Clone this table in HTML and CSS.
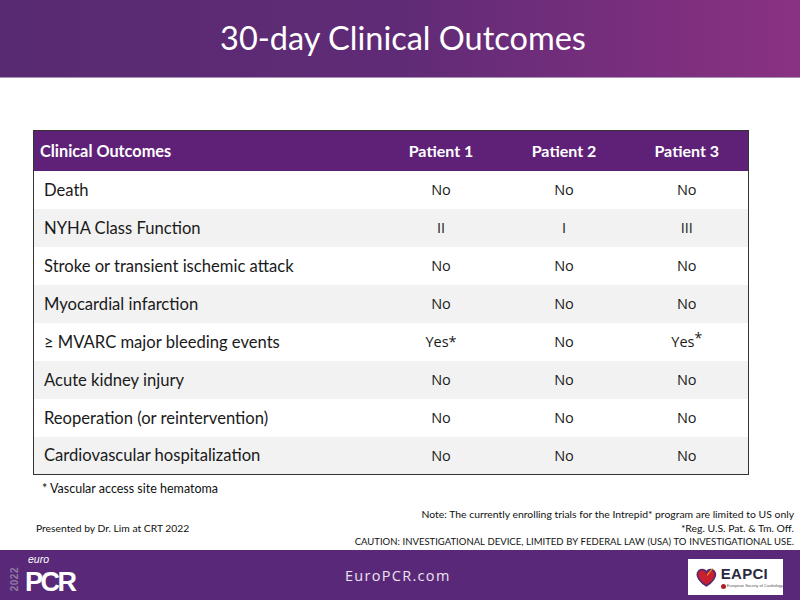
FILE: index.html
```html
<!DOCTYPE html>
<html>
<head>
<meta charset="utf-8">
<link rel="stylesheet" href="styles.css">
</head>
<body>
<div class="slide">
  <header class="titlebar"><h1>30-day Clinical Outcomes</h1></header>
  <main class="content">
    <table class="outcomes">
      <colgroup><col class="c-name"><col class="c-p"><col class="c-p"><col class="c-p"></colgroup>
      <thead>
        <tr><th class="name">Clinical Outcomes</th><th>Patient 1</th><th>Patient 2</th><th>Patient 3</th></tr>
      </thead>
      <tbody>
        <tr><td class="name">Death</td><td>No</td><td>No</td><td>No</td></tr>
        <tr><td class="name">NYHA Class Function</td><td>II</td><td>I</td><td>III</td></tr>
        <tr><td class="name">Stroke or transient ischemic attack</td><td>No</td><td>No</td><td>No</td></tr>
        <tr><td class="name">Myocardial infarction</td><td>No</td><td>No</td><td>No</td></tr>
        <tr><td class="name">≥ MVARC major bleeding events</td><td>Yes*</td><td>No</td><td>Yes<sup class="ast">*</sup></td></tr>
        <tr><td class="name">Acute kidney injury</td><td>No</td><td>No</td><td>No</td></tr>
        <tr><td class="name">Reoperation (or reintervention)</td><td>No</td><td>No</td><td>No</td></tr>
        <tr><td class="name">Cardiovascular hospitalization</td><td>No</td><td>No</td><td>No</td></tr>
      </tbody>
    </table>
    <p class="footnote">* Vascular access site hematoma</p>
    <div class="notes">
      <p class="presented">Presented by Dr. Lim at CRT 2022</p>
      <div class="legal">
        <p>Note: The currently enrolling trials for the Intrepid* program are limited to US only</p>
        <p>*Reg. U.S. Pat. &amp; Tm. Off.</p>
        <p class="caution">CAUTION: INVESTIGATIONAL DEVICE, LIMITED BY FEDERAL LAW (USA) TO INVESTIGATIONAL USE.</p>
      </div>
    </div>
  </main>
  <footer class="footbar">
    <div class="pcr-logo">
      <span class="year">2022</span>
      <div class="pcr-word"><span class="euro">euro</span><span class="pcr">PCR</span></div>
    </div>
    <div class="site">EuroPCR.com</div>
    <div class="eapci">
      <svg class="heart" viewBox="0 0 30 28" width="22" height="21">
        <path d="M15 26 C6 20 2 15 2 9.5 C2 5 5.5 2.5 9 2.5 C12 2.5 14 4.5 15 6.5 C16 4.5 18 2.5 21 2.5 C24.5 2.5 28 5 28 9.5 C28 15 24 20 15 26 Z" fill="#c8202f" stroke="#5a2a6e" stroke-width="2.6"/>
        <path d="M16 11 L24 1" stroke="#e0a020" stroke-width="1.6"/>
      </svg>
      <div class="eapci-text">
        <span class="eapci-name">EAPCI</span>
        <span class="esc"><i class="esc-dot"></i>European Society of Cardiology</span>
      </div>
    </div>
  </footer>
</div>
</body>
</html>
```
FILE: styles.css
```css
* { box-sizing: border-box; }
html, body { margin: 0; padding: 0; }
body { width: 800px; height: 600px; overflow: hidden; background: #fff; font-family: Lato, "Open Sans", sans-serif; }
.slide { width: 800px; height: 600px; display: flex; flex-direction: column; }
.titlebar {
  height: 78px;
  background: linear-gradient(90deg, #582a72 0%, #602b76 50%, #8a3182 100%);
  border-bottom: 1px solid #a890b8;
  display: flex; align-items: center; justify-content: center;
}
.titlebar h1 { margin: 0; padding-left: 6px; padding-bottom: 2px; font-weight: 400; font-size: 32.5px; color: #fff; letter-spacing: 0; }
.content { flex: 1; display: flex; flex-direction: column; padding: 52px 0 0 0; }
.outcomes {
  margin-left: 33px; width: 715px;
  border-collapse: collapse;
  border: 1px solid #333;
  table-layout: fixed;
  font-size: 15px;
  color: #1a1a1a;
}
.c-name { width: 346px; }
.c-p { width: 123px; }
.outcomes thead th {
  height: 40px; background: #5f2178; color: #fff; font-weight: 700; font-size: 16px;
  text-align: center; padding: 0;
}
.outcomes thead th.name { text-align: left; padding-left: 6px; font-size: 16.3px; }
.outcomes td { height: 38px; padding: 0; text-align: center; font-family: "Open Sans", sans-serif; font-size: 14.5px; }
.outcomes td.name { text-align: left; padding-left: 10px; font-family: Lato, sans-serif; font-size: 16.6px; }
.outcomes tbody tr:nth-child(even) td { background: #f2f2f2; }
.ast { font-size: 14px; vertical-align: 4px; line-height: 0; }
.footnote { margin: 6px 0 0 42px; font-size: 12.5px; color: #111; }
.notes { display: flex; justify-content: space-between; align-items: flex-end; margin-top: 11px; padding: 0 6px 0 36px; }
.notes p { margin: 0; }
.presented { font-size: 10.3px; color: #111; margin-bottom: 15px !important; }
.legal { text-align: right; font-size: 10.4px; line-height: 14px; color: #111; }
.legal .caution { font-size: 9.5px; word-spacing: 0.4px; }
.footbar {
  height: 50px; background: #5a2878; display: flex; align-items: center; padding: 0 17px 0 9px;
}
.pcr-logo { display: flex; align-items: center; width: 300px; }
.year {
  writing-mode: vertical-rl; transform: rotate(180deg);
  font-family: "Liberation Sans", sans-serif; font-weight: 700; font-size: 10px; color: #8d7aa0; letter-spacing: 0.5px;
  margin-right: 5px; margin-top: 8px;
}
.pcr-word { display: flex; flex-direction: column; }
.euro { font-style: italic; font-size: 10.5px; color: #fff; margin-left: 3px; font-family: "Liberation Sans", sans-serif; line-height: 13px; }
.pcr { font-family: "Liberation Sans", sans-serif; font-weight: 700; font-size: 27px; color: #fff; letter-spacing: -2.5px; line-height: 32px; }
.site { flex: 1; text-align: left; padding-left: 36px; font-family: "Open Sans", sans-serif; font-size: 14.5px; color: #ece4f2; letter-spacing: 1.3px; }
.eapci {
  width: 95px; height: 36px; background: #fff; display: flex; align-items: center; gap: 4px; padding-left: 8px; margin-top: 4px;
}
.eapci-text { display: flex; flex-direction: column; line-height: 1; }
.eapci-name { font-family: "Liberation Sans", sans-serif; font-weight: 700; font-size: 15px; color: #2a2a40; letter-spacing: 0.3px; }
.esc { font-size: 4px; color: #555; display: flex; align-items: center; gap: 1px; margin-top: 3px; font-family: "Liberation Sans", sans-serif; white-space: nowrap; }
.esc-dot { display: inline-block; width: 5px; height: 5px; border-radius: 50%; background: #b0202a; flex: none; }
```
